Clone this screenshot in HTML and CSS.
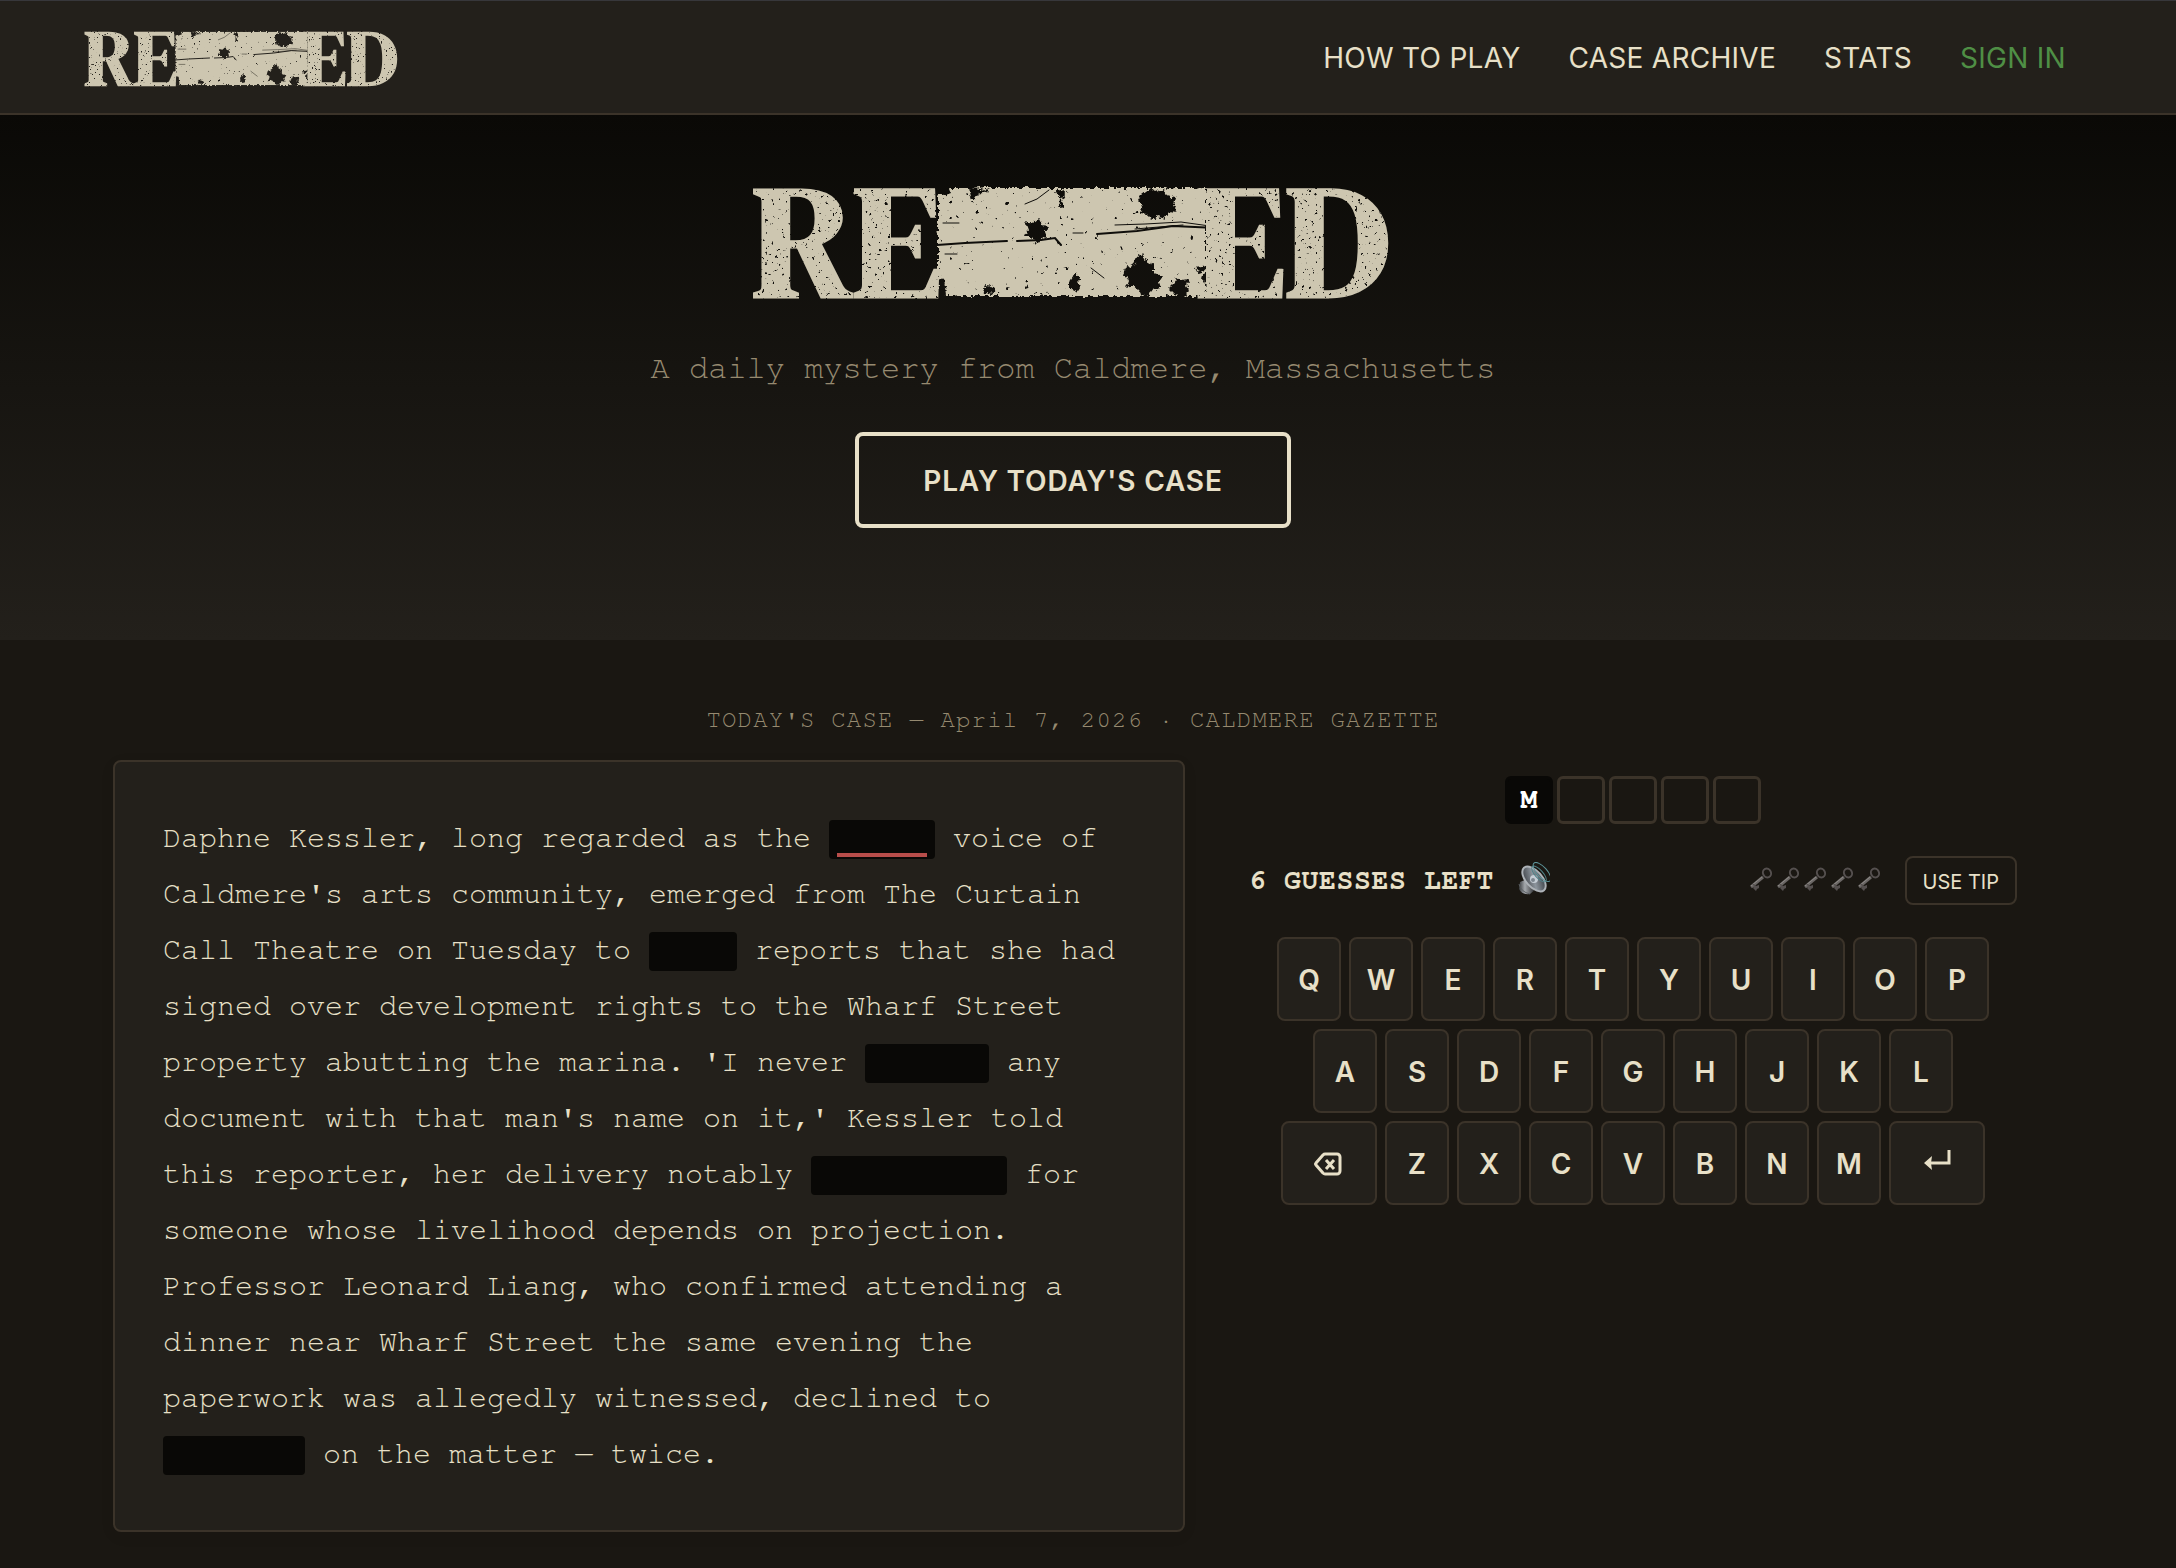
FILE: index.html
```html
<!DOCTYPE html>
<html lang="en">
<head>
<meta charset="utf-8">
<meta name="viewport" content="width=device-width, initial-scale=1">
<title>RE____ED — A daily mystery</title>
<link rel="stylesheet" href="styles.css">
</head>
<body>

<svg class="defs" width="0" height="0" aria-hidden="true">
  <defs>
    <!-- Ink wear: fine specks -->
    <filter id="specks" x="0" y="0" width="100%" height="100%">
      <feTurbulence type="fractalNoise" baseFrequency="0.3" numOctaves="3" seed="7"/>
      <feColorMatrix values="0 0 0 0 0  0 0 0 0 0  0 0 0 0 0  14 0 0 0 -9.5"/>
    </filter>
    <filter id="specks-light" x="0" y="0" width="100%" height="100%">
      <feTurbulence type="fractalNoise" baseFrequency="0.2" numOctaves="3" seed="21"/>
      <feColorMatrix values="0 0 0 0 0  0 0 0 0 0  0 0 0 0 0  14 0 0 0 -10.2"/>
    </filter>
    <filter id="rough" x="-5%" y="-10%" width="110%" height="120%">
      <feTurbulence type="fractalNoise" baseFrequency="0.22" numOctaves="3" seed="4"/>
      <feDisplacementMap in="SourceGraphic" scale="7" xChannelSelector="R" yChannelSelector="G"/>
    </filter>
    <mask id="wear-type" maskUnits="userSpaceOnUse" x="-10" y="0" width="660" height="128">
      <rect x="-10" width="660" height="128" fill="#fff"/>
      <rect x="-10" width="660" height="128" filter="url(#specks)"/>
    </mask>
    <mask id="wear-bar" maskUnits="userSpaceOnUse" x="150" y="0" width="340" height="128">
      <rect x="150" width="340" height="128" fill="#fff"/>
      <rect x="150" width="340" height="128" filter="url(#specks-light)"/>
      <g filter="url(#rough)">
        <path d="M387 18l8-6 6 4 8-3 3 7 8 2-2 7 4 8-8-1-4 6-7-2-6 5-4-7-8-1 3-7-5-5z"/>
        <path d="M270 46l8 2 6-5 3 6 7 1-4 6 3 7-6-1-5 6-5-7-7 0 3-7z"/>
        <path d="M370 92l8-2 4-9 6-3 4 8 7 4 0 7 9 3-4 6 2 6-8 0-6 8-7-2-6-8-8 2 3-8-6-4z"/>
        <path d="M414 112l6-6 2-6 5 4 6-1-2 7 3 5-6 6-6-1zM315 104l5-7 4 5 2 12-7 2-5-6z"/>
        <path d="M300 16l8-3 3 6-4 6 2 7-5 1 1-10zM228 111l6-3 6 5-3 5-7-1zM180 8l14 4 2 5-8 3-10-4z"/>
        <path d="M184 102l5 1 2 16-7 2zM440 92l12-2-4 5-6 1zM449 98l4-3v14l-5-4zM214 12l12 1 8 3-12 2-5 7z"/>
      </g>
      <g fill="none" stroke="#000" stroke-linecap="round">
        <path d="M182 69l28-2 42-2" stroke-width="2"/>
        <path d="M262 65l24-1 14-2 6 7" stroke-width="2"/>
        <path d="M342 58l40-3 36-5 44 2" stroke-width="2"/>
        <path d="M360 49l30-1 36-2 36 5M380 53l48-4" stroke-width="1"/>
        <path d="M270 28l12-5 12-9M336 92l13 10" stroke-width="1"/>
        <path d="M188 47l16 0M190 78l12 0M318 57l10 0" stroke-width="1"/>
      </g>
    </mask>
    <symbol id="logo" viewBox="-2 0 640 128">
      <g class="logo-ink">
        <g mask="url(#wear-type)">
          <text class="logo-type" x="-3" y="120">RE</text>
          <text class="logo-type" x="634" y="120" text-anchor="end">ED</text>
        </g>
        <g mask="url(#wear-bar)">
          <rect x="183" y="12" width="268" height="108" filter="url(#rough)"/>
        </g>
      </g>
    </symbol>

    <symbol id="key" viewBox="0 0 24 24">
      <ellipse cx="18" cy="6" rx="4" ry="4.500" transform="rotate(-25 18 6)" fill="none" stroke="#55504f" stroke-width="2"/>
      <path d="M14 10L2 20" stroke="#6b6765" stroke-width="3"/>
      <path d="M13 10L2 19" stroke="#8b8885" stroke-width="1"/>
      <path d="M5 17l2 2 3-1 0 3-2 1-1 2-3-3 1-2-2-2z" fill="#55504f"/>
    </symbol>
  </defs>
</svg>

<header class="site-header">
  <a class="brand" href="#" aria-label="Home"><svg class="brand-logo" aria-hidden="true"><use href="#logo"/></svg></a>
  <nav class="site-nav">
    <a href="#how">HOW TO PLAY</a>
    <a href="#archive">CASE ARCHIVE</a>
    <a href="#stats">STATS</a>
    <a class="sign-in" href="#signin">SIGN IN</a>
  </nav>
</header>

<section class="hero">
  <svg class="hero-logo" aria-hidden="true"><use href="#logo"/></svg>
  <p class="tagline">A daily mystery from Caldmere, Massachusetts</p>
  <button class="play" type="button">PLAY TODAY'S CASE</button>
</section>

<main class="case">
  <h2 class="case-label">TODAY'S CASE — April 7, 2026 · CALDMERE GAZETTE</h2>
  <div class="board">
    <article class="clipping">
      <p>Daphne Kessler, long regarded as the <span class="redacted active" style="--letters:5"></span> voice of Caldmere's arts community, emerged from The Curtain Call Theatre on Tuesday to <span class="redacted" style="--letters:4"></span> reports that she had signed over development rights to the Wharf Street property abutting the marina. 'I never <span class="redacted" style="--letters:6"></span> any document with that man's name on it,' Kessler told this reporter, her delivery notably <span class="redacted" style="--letters:10"></span> for someone whose livelihood depends on projection. Professor Leonard Liang, who confirmed attending a dinner near Wharf Street the same evening the paperwork was allegedly witnessed, declined to <span class="redacted" style="--letters:7"></span> on the matter — twice.</p>
    </article>

    <section class="play-area">
      <div class="slots">
        <span class="slot filled">M</span><span class="slot"></span><span class="slot"></span><span class="slot"></span><span class="slot"></span>
      </div>

      <div class="status">
        <span class="guesses">6 GUESSES LEFT</span>
        <button class="sound" type="button" aria-label="Sound">
          <svg viewBox="0 0 34 34" aria-hidden="true">
            <defs>
              <linearGradient id="cone" x1="0" y1="0" x2="1" y2="1">
                <stop offset="0" stop-color="#2a2c30"/><stop offset=".5" stop-color="#8d959d"/><stop offset="1" stop-color="#22252a"/>
              </linearGradient>
              <linearGradient id="magnet" x1="0" y1="0" x2="1" y2="0">
                <stop offset="0" stop-color="#3a3c3f"/><stop offset=".35" stop-color="#a5a9ad"/><stop offset="1" stop-color="#1b1c1e"/>
              </linearGradient>
            </defs>
            <path d="M4 20l7-3 9 10-6 5q-8 1-11-5z" fill="url(#magnet)"/>
            <path d="M3 22q2 8 11 10" fill="none" stroke="#5c6064" stroke-width="1"/>
            <ellipse cx="18" cy="17" rx="8" ry="15" transform="rotate(-42 18 17)" fill="url(#cone)" stroke="#aeb3b8" stroke-width="2"/>
            <circle cx="18" cy="17" r="4" fill="#c5cdd5"/>
            <circle cx="17" cy="18" r="2" fill="#7c858e"/>
            <ellipse cx="23" cy="12" rx="4" ry="10" transform="rotate(-42 23 12)" fill="none" stroke="#4f8288" stroke-width="1"/>
            <ellipse cx="26" cy="10" rx="5" ry="12" transform="rotate(-42 26 10)" fill="none" stroke="#5d959b" stroke-width="1"/>
          </svg>
        </button>
        <span class="tips" role="img" aria-label="5 tips left">
          <svg><use href="#key"/></svg><svg><use href="#key"/></svg><svg><use href="#key"/></svg><svg><use href="#key"/></svg><svg><use href="#key"/></svg>
        </span>
        <button class="use-tip" type="button">USE TIP</button>
      </div>

      <div class="keyboard">
        <div class="key-row">
          <button class="key" type="button">Q</button><button class="key" type="button">W</button><button class="key" type="button">E</button><button class="key" type="button">R</button><button class="key" type="button">T</button><button class="key" type="button">Y</button><button class="key" type="button">U</button><button class="key" type="button">I</button><button class="key" type="button">O</button><button class="key" type="button">P</button>
        </div>
        <div class="key-row">
          <button class="key" type="button">A</button><button class="key" type="button">S</button><button class="key" type="button">D</button><button class="key" type="button">F</button><button class="key" type="button">G</button><button class="key" type="button">H</button><button class="key" type="button">J</button><button class="key" type="button">K</button><button class="key" type="button">L</button>
        </div>
        <div class="key-row">
          <button class="key wide" type="button" aria-label="Backspace">
            <svg viewBox="0 0 32 32" fill="none" stroke="currentColor" stroke-width="3" stroke-linejoin="round" aria-hidden="true"><path d="M12 6h12a3 3 0 0 1 3 3v14a3 3 0 0 1-3 3H12q-1 0-2-1L3 17q-1-1 0-2l7-8q1-1 2-1z"/><path d="M13 12l8 9M21 12l-8 9"/></svg>
          </button>
          <button class="key" type="button">Z</button><button class="key" type="button">X</button><button class="key" type="button">C</button><button class="key" type="button">V</button><button class="key" type="button">B</button><button class="key" type="button">N</button><button class="key" type="button">M</button>
          <button class="key wide" type="button" aria-label="Enter">
            <svg viewBox="0 0 32 32" aria-hidden="true"><path d="M28 2v13H10" fill="none" stroke="currentColor" stroke-width="3"/><path d="M3 15l8-7-1 7 1 7z" fill="currentColor"/></svg>
          </button>
        </div>
      </div>
    </section>
  </div>
</main>

</body>
</html>
```
FILE: styles.css
```css
:root {
  --bg: #1a1712;
  --panel: #23201b;
  --line: #3b3329;
  --ink: #e8e0c8;
  --muted: #968a70;
  --black: #090806;
  --gutter: 30px;
  --mono: FreeMono, "Liberation Mono", monospace;
  --sans: Inter, "Liberation Sans", sans-serif;
}

* { box-sizing: border-box; }

body {
  margin: 0;
  background: var(--bg);
  color: var(--ink);
  font-family: var(--sans);
}

p, h2 { margin: 0; font-weight: 400; }

button {
  margin: 0;
  padding: 0;
  background: none;
  border: 0;
  color: inherit;
  font-family: inherit;
}

.defs { position: absolute; }

.logo-ink { fill: #cdc6b0; }

.logo-type {
  font-family: "DM Serif Display", "Liberation Serif", serif;
  font-size: 160px;
  font-weight: 700;
}

/* Header */
.site-header {
  display: flex;
  justify-content: space-between;
  align-items: center;
  height: 115px;
  padding: 0 calc(80px + var(--gutter)) 0 84px;
  background: var(--panel);
  border-top: 1px solid #37373b;
  border-bottom: 2px solid var(--line);
}

.brand-logo { display: block; width: 316px; height: 63px; }

.site-nav { display: flex; gap: 48px; padding-top: 2px; }

.site-nav a {
  color: var(--ink);
  font-size: 28px;
  letter-spacing: 0.01em;
  line-height: 40px;
  text-decoration: none;
}

.site-nav .sign-in { color: #4f8f45; }

/* Hero */
.hero {
  display: flex;
  flex-direction: column;
  align-items: center;
  gap: 40px;
  padding: 61px var(--gutter) 112px 0;
  background: linear-gradient(#0a0906, var(--panel));
}

.hero-logo { display: block; width: 640px; height: 128px; }

.tagline {
  color: var(--muted);
  font-family: var(--mono);
  font-size: 32px;
  line-height: 48px;
}

.play {
  height: 96px;
  padding: 2px 64px 0;
  border: 4px solid var(--ink);
  border-radius: 8px;
  font-size: 28px;
  font-weight: 600;
  letter-spacing: 0.03em;
}

/* Case */
.case {
  max-width: 1950px;
  margin: 0 auto;
  padding: 60px var(--gutter) 36px 0;
}

.case-label {
  margin-bottom: 20px;
  color: var(--muted);
  font-family: var(--mono);
  font-size: 24px;
  letter-spacing: 0.05em;
  line-height: 40px;
  text-align: center;
}

.board {
  display: grid;
  grid-template-columns: minmax(0, 1fr) 800px;
  gap: 48px;
  align-items: start;
}

.clipping {
  padding: 48px;
  background: var(--panel);
  border: 2px solid var(--line);
  border-radius: 8px;
  box-shadow: 0 4px 16px rgba(0, 0, 0, 0.05);
  font-family: var(--mono);
  font-size: 30px;
  line-height: 56px;
}

.redacted {
  display: inline-block;
  width: calc(var(--letters) * 1ch + 16px);
  height: 39px;
  padding: 33px 8px 0;
  vertical-align: -12px;
  background: var(--black);
  border-radius: 4px;
  line-height: 0;
}

.redacted.active::after {
  content: "";
  display: block;
  height: 4px;
  background: #b84d4a;
}

.play-area {
  display: flex;
  flex-direction: column;
  gap: 32px;
  padding: 16px;
}

.slots { display: flex; justify-content: center; gap: 4px; }

.slot {
  width: 48px;
  height: 48px;
  border: 3px solid var(--line);
  border-radius: 6px;
  font-family: var(--mono);
  font-size: 28px;
  font-weight: 700;
  line-height: 42px;
  text-align: center;
}

.slot.filled {
  background: var(--black);
  border-color: var(--black);
  color: #fff;
}

.status { display: flex; align-items: center; height: 49px; }

.guesses {
  font-family: var(--mono);
  font-size: 28px;
  font-weight: 700;
  letter-spacing: 0.025em;
}

.sound { margin-left: 22px; padding-bottom: 4px; }
.sound svg { display: block; width: 34px; height: 34px; }

.tips { display: flex; gap: 3px; margin-left: auto; padding-bottom: 4px; }
.tips svg { display: block; width: 24px; height: 24px; }

.use-tip {
  height: 49px;
  margin-left: 24px;
  padding: 2px 16px 0;
  border: 2px solid var(--line);
  border-radius: 8px;
  font-size: 20px;
}

.keyboard { display: flex; flex-direction: column; gap: 8px; }

.key-row { display: flex; justify-content: center; gap: 8px; }

.key {
  display: flex;
  align-items: center;
  justify-content: center;
  width: 64px;
  height: 84px;
  padding-top: 2px;
  background: var(--panel);
  border: 2px solid var(--line);
  border-radius: 8px;
  font-size: 28px;
  font-weight: 600;
}

.key.wide { width: 96px; }
.key svg { width: 32px; height: 32px; }
```
